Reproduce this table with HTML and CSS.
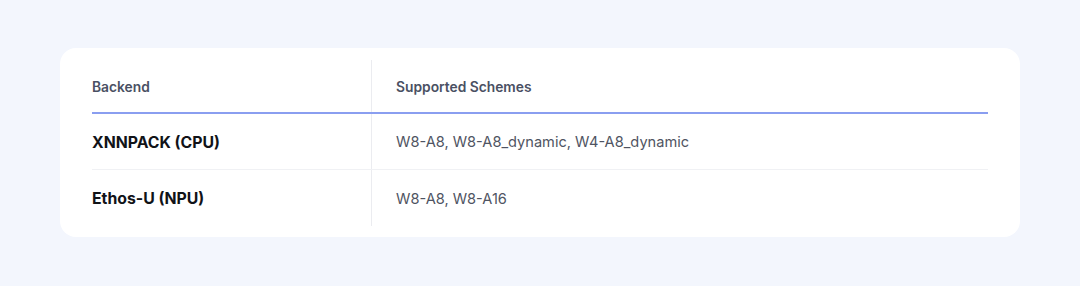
FILE: index.html
```html
<!DOCTYPE html>
<html>
<head>
<meta charset="utf-8">
<link rel="stylesheet" href="styles.css">
</head>
<body>
<div class="page">
  <div class="card">
    <table class="tbl">
      <thead>
        <tr>
          <th class="c1">Backend</th>
          <th class="c2">Supported Schemes</th>
        </tr>
      </thead>
      <tbody>
        <tr>
          <td class="c1 name">XNNPACK (CPU)</td>
          <td class="c2 val">W8-A8, W8-A8_dynamic, W4-A8_dynamic</td>
        </tr>
        <tr class="last">
          <td class="c1 name">Ethos-U (NPU)</td>
          <td class="c2 val">W8-A8, W8-A16</td>
        </tr>
      </tbody>
    </table>
  </div>
</div>
</body>
</html>
```

FILE: styles.css
```css
html, body {
  margin: 0;
  padding: 0;
  background: #f3f6fd;
  font-family: Inter, "Noto Sans", sans-serif;
}
.page {
  width: 1080px;
  height: 286px;
  padding: 48px 60px 0;
  box-sizing: border-box;
}
.card {
  background: #ffffff;
  border-radius: 16px;
  padding: 12px 32px 11px;
}
.tbl {
  width: 100%;
  border-collapse: collapse;
}
.tbl th {
  text-align: left;
  font-size: 13.8px;
  font-weight: 600;
  color: #4a5063;
  height: 50px;
  padding: 2px 0 0;
  border-bottom: 2px solid #8a9ef0;
  vertical-align: middle;
}
.tbl td {
  padding: 1px 0 0;
  height: 54px;
  vertical-align: middle;
  border-bottom: 1px solid #f0f1f4;
}
.tbl tr.last td {
  border-bottom: none;
  height: 55px;
}
.c1 {
  width: 279px;
  border-right: 1px solid #ebecf0;
}
.c2 {
  padding-left: 24px !important;
}
.name {
  font-size: 15.8px;
  font-weight: 700;
  color: #111318;
}
.val {
  font-size: 14.6px;
  font-weight: 400;
  color: #4f5462;
}
```
